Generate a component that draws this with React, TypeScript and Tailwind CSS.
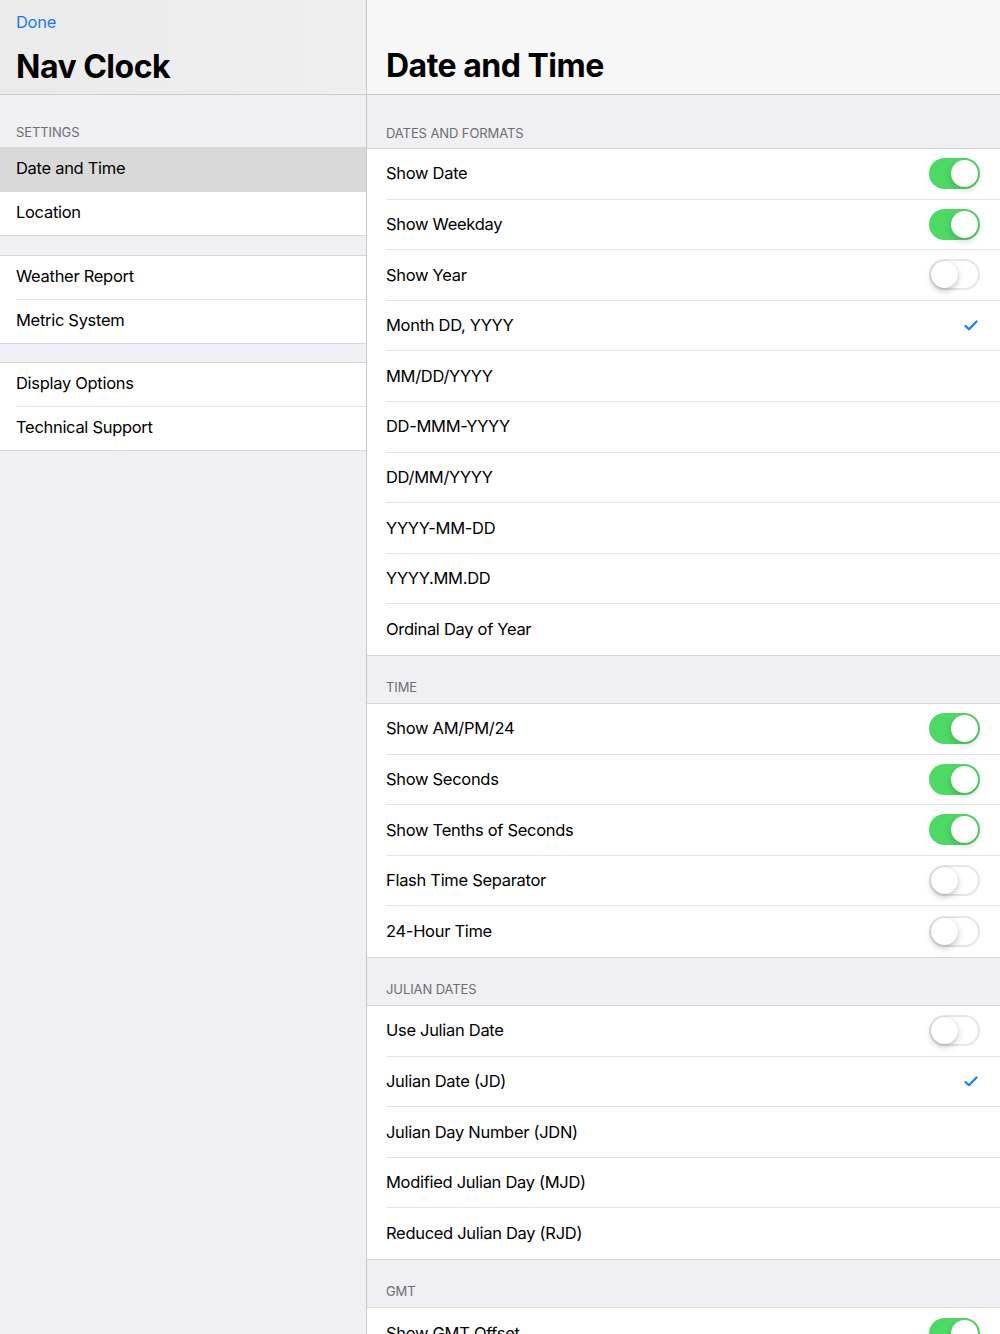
const font = { fontFamily: "Inter, 'Noto Sans', sans-serif" };

type Row = { label: string; kind?: "on" | "off" | "check" };

const Toggle = ({ on }: { on: boolean }) =>
    on ? (
        <div className="w-[51px] h-[31px] rounded-full bg-[#4cd964] relative">
            <div className="absolute right-[2px] top-[2px] w-[27px] h-[27px] rounded-full bg-white shadow-[0_3px_6px_rgba(0,0,0,0.18)]"></div>
        </div>
    ) : (
        <div className="w-[51px] h-[31px] rounded-full bg-white border-2 border-[#e6e6e9] relative">
            <div className="absolute left-0 top-0 w-[27px] h-[27px] rounded-full bg-white shadow-[0_3px_6px_rgba(0,0,0,0.22),0_0_0_0.5px_rgba(0,0,0,0.08)]"></div>
        </div>
    );

const Check = () => (
    <svg width="14" height="11" viewBox="0 0 14 11" fill="none">
        <path d="M1.5 6 L5 9.2 L12.5 1.5" stroke="#147efb" strokeWidth="2.2" strokeLinecap="round" strokeLinejoin="round" />
    </svg>
);

const Section = ({ title, rows, first }: { title: string; rows: Row[]; first?: boolean }) => (
    <div>
        <div className={`${first ? "h-[53px]" : "h-[47px]"} flex items-end pl-[19px] pb-[5px] text-[13px] text-[#6d6d72] uppercase tracking-[-0.1px]`}>
            {title}
        </div>
        <div className="bg-white border-y border-[#d8d8dc]">
            {rows.map((r, i) => (
                <div key={r.label} className="h-[50.6px] pl-[19px]">
                    <div className={`h-full flex items-center justify-between ${i < rows.length - 1 ? "border-b border-[#e3e3e6]" : ""} ${r.kind === "check" ? "pr-[22px]" : "pr-[20px]"}`}>
                        <span className="text-[16.5px] tracking-[-0.3px] text-black">{r.label}</span>
                        {r.kind === "on" && <Toggle on />}
                        {r.kind === "off" && <Toggle on={false} />}
                        {r.kind === "check" && <Check />}
                    </div>
                </div>
            ))}
        </div>
    </div>
);

const SideGroup = ({ items, selected }: { items: string[]; selected?: string }) => (
    <div className="bg-white border-y border-[#d8d8dc]">
        {items.map((t, i) => (
            <div key={t} className={`h-[43.5px] pl-4 ${t === selected ? "bg-[#d9d9d9]" : ""}`}>
                <div className={`h-full flex items-center pb-[2px] ${i < items.length - 1 && t !== selected ? "border-b border-[#e3e3e6]" : ""}`}>
                    <span className="text-[16.5px] tracking-[-0.3px] text-black">{t}</span>
                </div>
            </div>
        ))}
    </div>
);

export default function App() {
    return (
        <div className="w-[1000px] h-[1334px] overflow-hidden flex bg-[#efeff4]" style={font}>
            <div className="w-[367px] shrink-0 border-r border-[#c8c8cc] flex flex-col">
                <div className="h-[95px] bg-gradient-to-r from-[#ebebeb] to-[#efefef] border-b border-[#cdcdd0] px-4 pt-[11px]">
                    <div className="text-[16.5px] tracking-[-0.3px] text-[#147efb] leading-[22px]">Done</div>
                    <div className="text-[32px] font-bold leading-[40px] mt-[14px] tracking-[-0.5px]">Nav Clock</div>
                </div>
                <div className="h-[52px] flex items-end pl-4 pb-[5px] text-[13px] text-[#6d6d72] tracking-[-0.1px]">SETTINGS</div>
                <SideGroup items={["Date and Time", "Location"]} selected="Date and Time" />
                <div className="h-[19px]"></div>
                <SideGroup items={["Weather Report", "Metric System"]} />
                <div className="h-[18px]"></div>
                <SideGroup items={["Display Options", "Technical Support"]} />
            </div>
            <div className="flex-1 flex flex-col">
                <div className="h-[95px] shrink-0 bg-[#f7f7f7] border-b border-[#cdcdd0] pl-[19px] flex items-end pb-[8px]">
                    <div className="text-[32px] font-bold leading-[40px] tracking-[-0.5px]">Date and Time</div>
                </div>
                <Section
                    first
                    title="Dates and Formats"
                    rows={[
                        { label: "Show Date", kind: "on" },
                        { label: "Show Weekday", kind: "on" },
                        { label: "Show Year", kind: "off" },
                        { label: "Month DD, YYYY", kind: "check" },
                        { label: "MM/DD/YYYY" },
                        { label: "DD-MMM-YYYY" },
                        { label: "DD/MM/YYYY" },
                        { label: "YYYY-MM-DD" },
                        { label: "YYYY.MM.DD" },
                        { label: "Ordinal Day of Year" },
                    ]}
                />
                <Section
                    title="Time"
                    rows={[
                        { label: "Show AM/PM/24", kind: "on" },
                        { label: "Show Seconds", kind: "on" },
                        { label: "Show Tenths of Seconds", kind: "on" },
                        { label: "Flash Time Separator", kind: "off" },
                        { label: "24-Hour Time", kind: "off" },
                    ]}
                />
                <Section
                    title="Julian Dates"
                    rows={[
                        { label: "Use Julian Date", kind: "off" },
                        { label: "Julian Date (JD)", kind: "check" },
                        { label: "Julian Day Number (JDN)" },
                        { label: "Modified Julian Day (MJD)" },
                        { label: "Reduced Julian Day (RJD)" },
                    ]}
                />
                <Section title="GMT" rows={[{ label: "Show GMT Offset", kind: "on" }]} />
            </div>
        </div>
    );
}
